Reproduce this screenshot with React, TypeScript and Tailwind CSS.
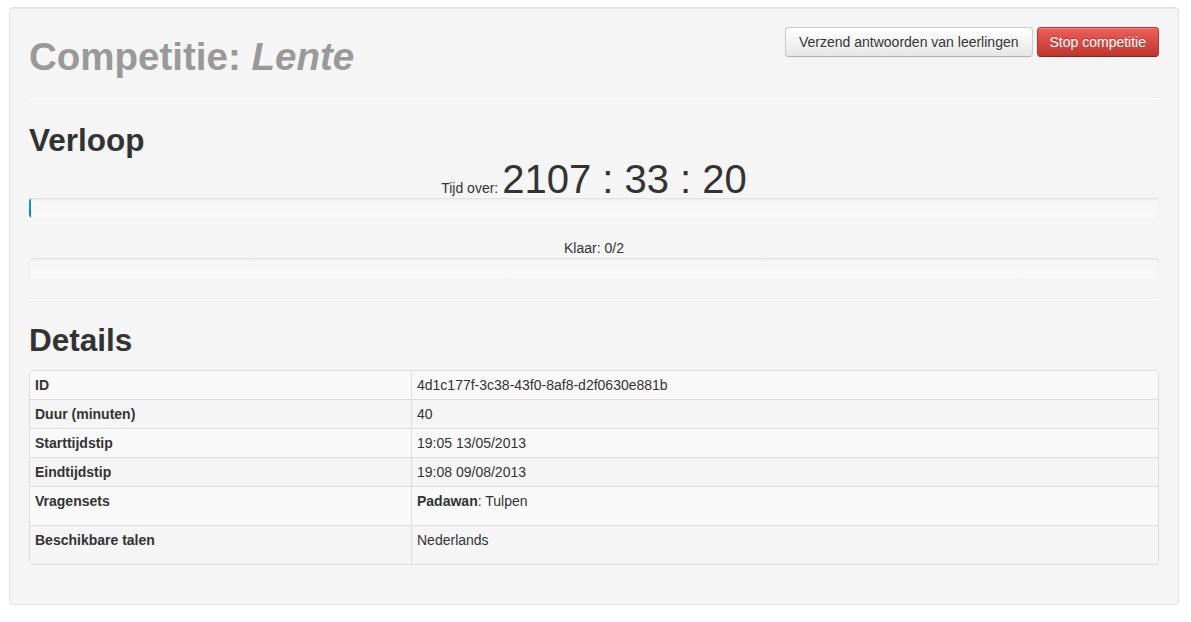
import React from "react";

const DETAILS: { label: string; value: React.ReactNode; tall?: boolean }[] = [
  { label: "ID", value: "4d1c177f-3c38-43f0-8af8-d2f0630e881b" },
  { label: "Duur (minuten)", value: "40" },
  { label: "Starttijdstip", value: "19:05 13/05/2013" },
  { label: "Eindtijdstip", value: "19:08 09/08/2013" },
  {
    label: "Vragensets",
    value: (
      <>
        <span className="font-bold">Padawan</span>: Tulpen
      </>
    ),
    tall: true,
  },
  { label: "Beschikbare talen", value: "Nederlands", tall: true },
];

function Progress({ percent }: { percent: number }) {
  return (
    <div className="h-[20px] w-full overflow-hidden rounded-[4px] bg-gradient-to-b from-[#f5f5f5] to-[#f9f9f9] shadow-[inset_0_1px_2px_rgba(0,0,0,0.1)]">
      {percent > 0 && (
        <div
          className="h-full bg-gradient-to-b from-[#149bdf] to-[#0480be] shadow-[inset_0_-1px_0_rgba(0,0,0,0.15)]"
          style={{ width: `${percent}%` }}
        />
      )}
    </div>
  );
}

function Divider() {
  return <hr className="m-0 border-0 border-t border-b border-t-[#eeeeee] border-b-white" />;
}

export default function App() {
  return (
    <div className="min-h-screen bg-white pt-[7px] font-['Liberation_Sans',Arial,sans-serif] text-[14px] leading-[20px] text-[#333]">
      <div className="ml-[9px] w-[1170px] rounded-[4px] border border-[#e3e3e3] bg-[#f5f5f5] p-[19px] shadow-[inset_0_1px_1px_rgba(0,0,0,0.05)]">
        <div className="flex items-start justify-between">
          <h1 className="mt-[10px] text-[38.5px] font-bold leading-[40px] text-[#999]">
            Competitie: <em className="italic">Lente</em>
          </h1>
          <div className="flex gap-[4px]">
            <button
              type="button"
              className="h-[30px] rounded-[4px] border border-[#ccc] border-b-[#b3b3b3] bg-gradient-to-b from-white to-[#e6e6e6] px-[13px] text-[14px] leading-[20px] text-[#333] shadow-[inset_0_1px_0_rgba(255,255,255,0.2),0_1px_2px_rgba(0,0,0,0.05)] [text-shadow:0_1px_1px_rgba(255,255,255,0.75)]"
            >
              Verzend antwoorden van leerlingen
            </button>
            <button
              type="button"
              className="h-[30px] rounded-[4px] border border-[#bd362f] border-b-[#802420] bg-gradient-to-b from-[#ee5f5b] to-[#bd362f] px-[12px] text-[14px] leading-[20px] text-white shadow-[inset_0_1px_0_rgba(255,255,255,0.2),0_1px_2px_rgba(0,0,0,0.05)] [text-shadow:0_-1px_0_rgba(0,0,0,0.25)]"
            >
              Stop competitie
            </button>
          </div>
        </div>

        <div className="mt-[20px]">
          <Divider />
        </div>

        <h2 className="mt-[21px] text-[31.5px] font-bold leading-[40px] text-[#333]">Verloop</h2>
        <div className="h-[38px] text-center leading-[38px]">
          Tijd over: <span className="text-[40px]">2107 : 33 : 20</span>
        </div>
        <Progress percent={0.18} />
        <div className="mt-[20px] text-center">Klaar: 0/2</div>
        <Progress percent={0} />

        <div className="mt-[20px]">
          <Divider />
        </div>

        <h2 className="mt-[20px] text-[31.5px] font-bold leading-[40px] text-[#333]">Details</h2>
        <div className="mt-[10px] mb-[20px] overflow-hidden rounded-[4px] border border-[#ddd]">
          {DETAILS.map((row, i) => (
            <div
              key={row.label}
              className={`flex ${i > 0 ? "border-t border-[#ddd]" : ""} ${
                i % 2 === 0 ? "bg-[#f9f9f9]" : "bg-[#f5f5f5]"
              }`}
            >
              <div
                className={`w-[381px] shrink-0 px-[5px] pt-[4px] font-bold ${
                  row.tall ? "pb-[14px]" : "pb-[4px]"
                }`}
              >
                {row.label}
              </div>
              <div
                className={`flex-1 border-l border-[#ddd] px-[5px] pt-[4px] ${
                  row.tall ? "pb-[14px]" : "pb-[4px]"
                }`}
              >
                {row.value}
              </div>
            </div>
          ))}
        </div>
      </div>
    </div>
  );
}
